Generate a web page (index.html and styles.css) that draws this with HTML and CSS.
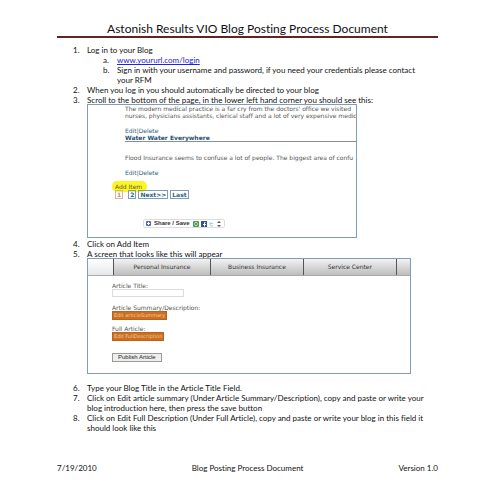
FILE: index.html
```html
<!DOCTYPE html>
<html lang="en">
<head>
    <meta charset="UTF-8">
    <meta name="viewport" content="width=device-width, initial-scale=1.0">
    <title>Blog Posting Process Document</title>
    <link rel="stylesheet" href="styles.css">
</head>
<body>
    <header>
        <h1>Astonish Results VIO Blog Posting Process Document</h1>
    </header>
    <main>
        <ol class="steps">
            <li>Log in to your Blog
                <ol class="substeps">
                    <li><a href="#login">www.yoururl.com/login</a></li>
                    <li>Sign in with your username and password, if you need your credentials please contact<br>your RFM</li>
                </ol>
            </li>
            <li>When you log in you should automatically be directed to your blog</li>
            <li>Scroll to the bottom of the page, in the lower left hand corner you should see this:
                <div class="shot blog-list">
                    <p class="excerpt">The modern medical practice is a far cry from the doctors' office we visited<br>nurses, physicians assistants, clerical staff and a lot of very expensive medic</p>
                    <div class="actions"><a href="#edit">Edit</a>|<a href="#delete">Delete</a></div>
                    <h2>Water Water Everywhere</h2>
                    <p class="excerpt">Flood Insurance seems to confuse a lot of people. The biggest area of confu</p>
                    <div class="actions"><a href="#edit">Edit</a>|<a href="#delete">Delete</a></div>
                    <a class="add-item" href="#add">Add Item</a>
                    <nav class="pager">
                        <a class="current" href="#p1">1</a>
                        <a href="#p2">2</a>
                        <a href="#next">Next&gt;&gt;</a>
                        <a href="#last">Last</a>
                    </nav>
                    <button class="share" type="button">
                        <svg width="5" height="5" viewBox="0 0 5 5"><rect width="5" height="5" rx="1" fill="#4a68cc"/><path d="M2.5 1v3M1 2.5h3" stroke="#fff"/></svg>
                        <span>Share / Save</span>
                        <svg width="29" height="6" viewBox="0 0 29 6">
                            <rect width="6" height="6" rx="1" fill="#4c9c4c"/>
                            <path d="M1.500 2.500c1-2 3-1 3 0M4.500 3.500c-1 2-3 1-3 0" fill="none" stroke="#fff"/>
                            <rect x="8" width="6" height="6" fill="#34528c"/>
                            <path d="M12.500 1.500h-1v4M10 3.500h3" fill="none" stroke="#fff"/>
                            <path d="M17 1v3q0 1 3 1M17 2.500h3" fill="none" stroke="#9fd0e6"/>
                            <path d="M26 0l2 2h-4zM26 6l2-2h-4z" fill="#555"/>
                        </svg>
                    </button>
                </div>
            </li>
            <li>Click on Add Item</li>
            <li>A screen that looks like this will appear
                <div class="shot article-form">
                    <nav class="tabs">
                        <span></span>
                        <a href="#personal">Personal Insurance</a>
                        <a href="#business">Business Insurance</a>
                        <a href="#service">Service Center</a>
                        <span></span>
                    </nav>
                    <form>
                        <label for="title">Article Title:</label>
                        <input type="text" id="title">
                        <label for="summary">Article Summary/Description:</label>
                        <button class="edit" id="summary" type="button">Edit articleSummary</button>
                        <label for="full">Full Article:</label>
                        <button class="edit" id="full" type="button">Edit FullDescription</button>
                        <button class="publish" type="button">Publish Article</button>
                    </form>
                </div>
            </li>
            <li>Type your Blog Title in the Article Title Field.</li>
            <li>Click on Edit article summary (Under Article Summary/Description), copy and paste or write your<br>blog introduction here, then press the save button</li>
            <li>Click on Edit Full Description (Under Full Article), copy and paste or write your blog in this field it<br>should look like this</li>
        </ol>
    </main>
    <footer>
        <span>7/19/2010</span>
        <span>Blog Posting Process Document</span>
        <span>Version 1.0</span>
    </footer>
</body>
</html>
```
FILE: styles.css
```css
* {
    box-sizing: border-box;
}
body {
    margin: 0;
    padding: 21px 57px 0;
    background-color: #fff;
    color: #111;
    font-family: Lato, "Open Sans", sans-serif;
    font-size: 8px;
    font-variant-ligatures: none;
    line-height: 10px;
}
h1, h2, p, ol {
    margin: 0;
    padding: 0;
}
h1 {
    border-bottom: 2px solid #622423;
    text-align: center;
    font-size: 12px;
    font-weight: 400;
    line-height: 15px;
    white-space: nowrap;
}
main {
    padding-top: 7px;
}
.steps, .substeps {
    list-style: none;
    counter-reset: step;
    white-space: nowrap;
}
.steps {
    padding-left: 30px;
}
.substeps {
    padding-left: 30px;
}
.steps li {
    position: relative;
    counter-increment: step;
}
.steps li::before {
    content: counter(step) ".";
    position: absolute;
    left: -14px;
}
.substeps li::before {
    content: counter(step, lower-alpha) ".";
}
.substeps a {
    color: #2222dd;
}

/* screenshots inside the steps */
.shot {
    margin-top: -1px;
    border: 1px solid #7f9db9;
    overflow: hidden;
    font-family: "DejaVu Sans", sans-serif;
    font-size: 6px;
    line-height: 7px;
    color: #555;
}
.shot a {
    color: #2b5f80;
    text-decoration: none;
}
.blog-list {
    width: 77%;
    max-width: 270px;
    height: 134px;
    margin-bottom: 1px;
    padding-left: 37px;
}
.blog-list .actions {
    margin-top: 8px;
}
.blog-list h2 {
    margin-bottom: 12px;
    border-bottom: 1px solid #8a8f96;
    color: #1f4e79;
    font-size: 6px;
    line-height: 7px;
}
.shot .add-item {
    display: block;
    width: 35px;
    margin: 5px 0 0 -13px;
    padding: 2px 3px;
    border-radius: 5px;
    background-color: #fbf428;
    color: #55601c;
    line-height: 7px;
}
.pager {
    display: flex;
    gap: 2px;
    margin: -2px 0 0 -10px;
    font-weight: 700;
}
.pager a {
    padding: 0 1px;
    border: 1px solid #7f9db9;
}
.pager .current {
    margin-right: 3px;
    border-color: #d9b59c;
    color: #c98a5c;
}
.share {
    display: flex;
    align-items: center;
    gap: 3px;
    margin: 20px 0 0 18px;
    padding: 0 2px;
    border: 1px solid #ddd;
    border-radius: 2px;
    background-color: #fff;
    color: #333;
    font: 700 6px/7px "Liberation Sans", sans-serif;
}
.article-form {
    width: 93%;
    max-width: 324px;
    height: 116px;
    margin-bottom: 9px;
}
.tabs {
    display: grid;
    grid-template-columns: 25fr 98fr 93fr 94fr 14fr;
    height: 17px;
    background: linear-gradient(#f2f2f2, #bdbdbd);
    border-bottom: 1px solid #aaa;
    line-height: 15px;
    text-align: center;
}
.tabs > * + * {
    border-left: 1px solid #555;
}
.tabs > :first-child {
    background: linear-gradient(#fff, #e4e8ea);
}
.shot .tabs a {
    color: #333;
}
form {
    display: flex;
    flex-direction: column;
    align-items: flex-start;
    padding: 6px 24px 0;
}
form input {
    width: 72px;
    height: 8px;
    margin-bottom: 7px;
    padding: 0 1px;
    border: 1px solid #ddd;
    font-size: 6px;
}
.edit {
    margin-bottom: 5px;
    padding: 0 1px;
    border: 1px solid #b5651d;
    background-color: #cc6f22;
    color: #f7c99a;
    font: 5px/7px "DejaVu Sans", sans-serif;
}
.publish {
    margin-top: 7px;
    padding: 0 5px;
    border: 1px solid #999;
    background-color: #eee;
    color: #222;
    font: 6px/7px "Liberation Sans", sans-serif;
}
footer {
    display: flex;
    justify-content: space-between;
    margin-top: 30px;
}
```
